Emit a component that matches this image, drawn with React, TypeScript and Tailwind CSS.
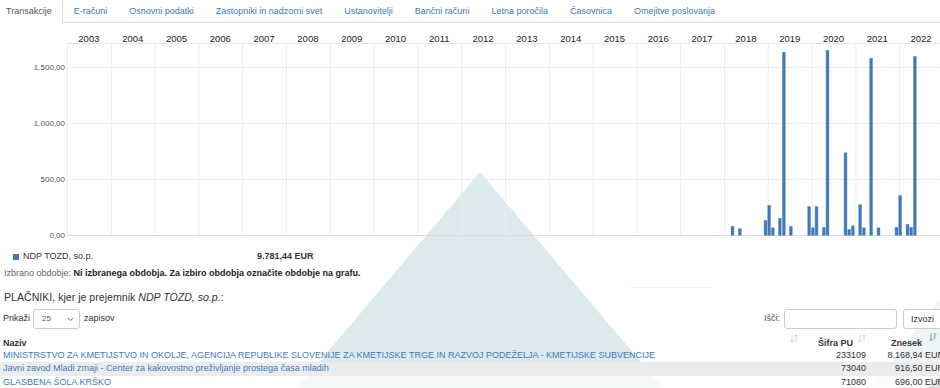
import React from "react";
import { ChevronDown } from "lucide-react";

const tabs = [
  "Transakcije",
  "E-računi",
  "Osnovni podatki",
  "Zastopniki in nadzorni svet",
  "Ustanovitelji",
  "Bančni računi",
  "Letna poročila",
  "Časovnica",
  "Omejitve poslovanja",
];

const years = Array.from({ length: 20 }, (_, i) => 2003 + i);
const COL = 43.8;
const X0 = 67;
const BASE = 235.5;

// monthly bars: [x, height in px]
const bars: [number, number][] = [
  [731, 9.3], [738.3, 7], [764, 15.3], [767.7, 30.3], [771.3, 7.7], [778.3, 17.3],
  [782.3, 183.3], [789.3, 9.3], [807.7, 29], [811.3, 7.7], [815, 29], [822.3, 8.3],
  [826, 185.3], [844, 82.7], [847.7, 6.3], [851.3, 9.7], [858.7, 31], [862.3, 7.7],
  [869.7, 177.3], [877, 7.7], [895, 8.3], [898.7, 40], [906, 11.3], [909.7, 8.3],
  [913.3, 179.3],
];

const yTicks = [
  { y: 67.5, label: "1.500,00" },
  { y: 123.5, label: "1.000,00" },
  { y: 179.5, label: "500,00" },
  { y: 235.5, label: "0,00" },
];

const rows = [
  {
    name: "MINISTRSTVO ZA KMETIJSTVO IN OKOLJE, AGENCIJA REPUBLIKE SLOVENIJE ZA KMETIJSKE TRGE IN RAZVOJ PODEŽELJA - KMETIJSKE SUBVENCIJE",
    code: "233109",
    amount: "8.168,94 EUR",
    bg: "",
  },
  {
    name: "Javni zavod Mladi zmaji - Center za kakovostno preživljanje prostega časa mladih",
    code: "73040",
    amount: "916,50 EUR",
    bg: "bg-[#ececec]",
  },
  { name: "GLASBENA ŠOLA KRŠKO", code: "71080", amount: "696,00 EUR", bg: "bg-white/70" },
];

function SortIcon({ active = false }: { active?: boolean }) {
  if (active) {
    return (
      <svg width="8" height="9" viewBox="0 0 8 9" className="text-[#8a8a8a]">
        <path d="M2 0.5v7M0.5 6l1.5 1.8L3.5 6" stroke="currentColor" strokeWidth="0.9" fill="none" />
        <path d="M4.5 1h3M4.5 3h2.4M4.5 5h1.8M4.5 7h1.2" stroke="currentColor" strokeWidth="0.9" />
      </svg>
    );
  }
  return (
    <svg width="8" height="9" viewBox="0 0 8 9" className="text-[#cfcfcf]">
      <path d="M2 1v7M0.6 6.4L2 8l1.4-1.6" stroke="currentColor" strokeWidth="0.9" fill="none" />
      <path d="M6 8V1M4.6 2.6L6 1l1.4 1.6" stroke="currentColor" strokeWidth="0.9" fill="none" />
    </svg>
  );
}

function Chart() {
  return (
    <svg width="940" height="222" viewBox="0 23 940 222" className="block">
      {years.map((y, i) => (
        <text
          key={y}
          x={X0 + i * COL + COL / 2}
          y={42}
          textAnchor="middle"
          fontSize="9.5"
          fill="#222"
          fontFamily="'Liberation Sans', Arial, sans-serif"
        >
          {y}
        </text>
      ))}
      <line x1={X0} x2={940} y1={43.5} y2={43.5} stroke="#e6e6e6" />
      {yTicks.map((t) => (
        <g key={t.label}>
          <line x1={X0} x2={940} y1={t.y} y2={t.y} stroke={t.label === "0,00" ? "#dcdcdc" : "#ececec"} />
          <text
            x={65}
            y={t.y + 2.8}
            textAnchor="end"
            fontSize="8"
            fill="#555"
            fontFamily="'Liberation Sans', Arial, sans-serif"
          >
            {t.label}
          </text>
        </g>
      ))}
      {Array.from({ length: 21 }, (_, i) => (
        <line
          key={i}
          x1={X0 + i * COL + 0.5}
          x2={X0 + i * COL + 0.5}
          y1={43}
          y2={BASE}
          stroke="#ececec"
        />
      ))}
      {bars.map(([x, h], i) => (
        <rect
          key={i}
          x={x}
          y={BASE - h}
          width={3}
          height={h}
          fill="#3f7ab7"
          stroke="#7aa3cf"
          strokeWidth="0.5"
        />
      ))}
    </svg>
  );
}

export default function App() {
  return (
    <div className="relative w-[940px] h-[388px] overflow-hidden bg-white font-['Liberation_Sans',Arial,sans-serif] text-[9px] text-[#333]">
      {/* watermark */}
      <svg width="940" height="388" className="absolute left-0 top-0 pointer-events-none">
        <polygon points="480,172 297,388 663,388" fill="#dceaee" />
        <polygon points="945,292 872,388 945,388" fill="#eef5f7" />
        <polygon points="940,376 928,388 940,388" fill="#9a9a9a" />
        <line x1="630" x2="712" y1="287.5" y2="287.5" stroke="#f4f4f4" />
      </svg>

      <div className="relative">
        <div className="flex h-[23px] border-b border-[#ddd]">
          {tabs.map((t, i) =>
            i === 0 ? (
              <div
                key={t}
                className="-mb-px h-[24px] pl-[6px] pr-[10px] bg-white border-r border-[#ddd] text-[#555] leading-[22px]"
              >
                {t}
              </div>
            ) : (
              <div key={t} className="px-[11px] text-[#3b7bbf] leading-[22px] whitespace-nowrap">
                {t}
              </div>
            )
          )}
        </div>

        <Chart />

        <div className="mt-[5px] flex items-center h-[14px] pl-[13px]">
          <span className="w-[6px] h-[6px] bg-[#3f7ab7] mr-[4px]" />
          <span className="w-[234px]">NDP TOZD, so.p.</span>
          <span className="font-bold">9.781,44 EUR</span>
        </div>
        <div className="mt-[2px] h-[14px] leading-[14px] pl-[4px] text-[#666]">
          Izbrano obdobje:{" "}
          <span className="font-bold text-[#222]">
            Ni izbranega obdobja. Za izbiro obdobja označite obdobje na grafu.
          </span>
        </div>

        <div className="mt-[9px] h-[16px] leading-[16px] pl-[4px] text-[10.6px] text-[#333]">
          PLAČNIKI, kjer je prejemnik <i>NDP TOZD, so.p.</i>:
        </div>

        <div className="mt-[4px] flex items-center w-[953px] h-[20px] pl-[3px]">
          <span>Prikaži</span>
          <div className="ml-[3px] w-[47px] h-[20px] border border-[#ccc] rounded-[3px] flex items-center justify-between pl-[8px] pr-[4px] text-[8px] text-[#555]">
            <span>25</span>
            <ChevronDown size={9} strokeWidth={2} color="#444" />
          </div>
          <span className="ml-[4px]">zapisov</span>
          <div className="ml-auto flex items-center">
            <span className="text-[#555]">Išči:</span>
            <div className="ml-[4px] w-[113px] h-[20px] border border-[#ccc] rounded-[3px] bg-white" />
            <div className="ml-[6px] w-[50px] h-[20px] border border-[#ccc] rounded-[3px] bg-white pl-[7px] leading-[18px] text-[#333]">
              Izvozi
            </div>
          </div>
        </div>

        <table className="mt-[4px] table-fixed w-[946px] border-collapse">
          <colgroup>
            <col className="w-[801px]" />
            <col className="w-[68px]" />
            <col className="w-[77px]" />
          </colgroup>
          <thead>
            <tr className="h-[16px]">
              <th className="relative text-left font-bold pl-[3px] align-bottom leading-[12px]">
                Naziv
                <span className="absolute right-[3px] top-[1px]">
                  <SortIcon />
                </span>
              </th>
              <th className="relative text-right font-bold pr-[16px] align-bottom leading-[12px]">
                Šifra PU
                <span className="absolute right-[3px] top-[1px]">
                  <SortIcon />
                </span>
              </th>
              <th className="relative text-right font-bold pr-[24px] align-bottom leading-[12px]">
                Znesek
                <span className="absolute right-[9px] top-[0px]">
                  <SortIcon active />
                </span>
              </th>
            </tr>
          </thead>
          <tbody>
            {rows.map((r) => (
              <tr key={r.code} className={`h-[13.3px] ${r.bg}`}>
                <td className="pl-[3px] text-[#3b7bbf] whitespace-nowrap overflow-hidden leading-[13px]">
                  {r.name}
                </td>
                <td className="text-right pr-[3px] leading-[13px]">{r.code}</td>
                <td className="text-right pr-[2px] leading-[13px] whitespace-nowrap">{r.amount}</td>
              </tr>
            ))}
          </tbody>
        </table>
      </div>
    </div>
  );
}
